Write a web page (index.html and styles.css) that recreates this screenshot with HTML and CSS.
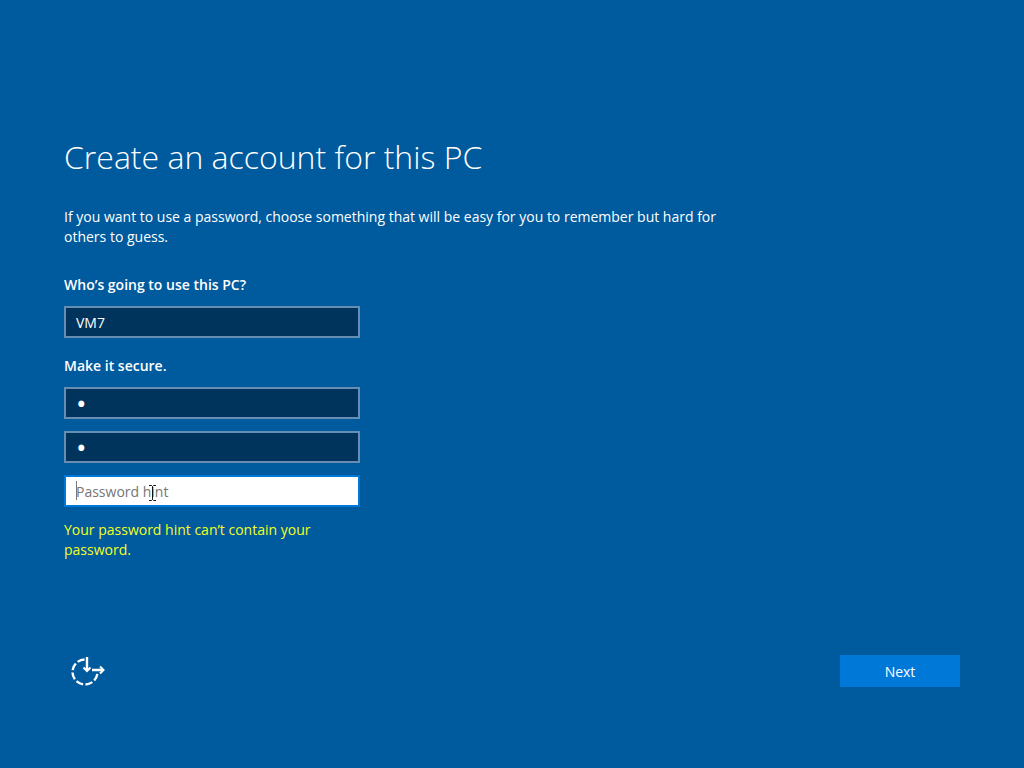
FILE: index.html
```html
<!doctype html>
<html lang="en">
<head>
    <meta charset="UTF-8">
    <meta name="viewport" content="width=device-width, initial-scale=1.0">
    <title>Create an account for this PC</title>
    <link rel="stylesheet" href="styles.css">
</head>
<body>
    <form class="setup">
        <main class="content">
            <h1>Create an account for this PC</h1>
            <p class="intro">If you want to use a password, choose something that will be easy for you to remember but hard for others to guess.</p>

            <div class="fields">
                <div class="form-group">
                    <label for="user-name">Who’s going to use this PC?</label>
                    <input type="text" id="user-name" value="VM7">
                </div>
                <div class="form-group">
                    <label for="password">Make it secure.</label>
                    <input type="password" id="password" value="1">
                    <input type="password" id="confirm-password" aria-label="Re-enter password" value="1">
                    <div class="hint-field">
                        <input type="text" class="active" id="password-hint" aria-label="Password hint" aria-describedby="hint-error" placeholder="Password hint">
                        <span class="caret"></span>
                        <svg class="pointer" width="9" height="16" viewBox="0 0 9 16" aria-hidden="true">
                            <path d="M1 .5h2.500l1 1 1-1H8M4.500 1.500v13M1 15.500h2.500l1-1 1 1H8" fill="none" stroke="#111"/>
                        </svg>
                    </div>
                </div>
                <p class="error" id="hint-error">Your password hint can’t contain your password.</p>
            </div>
        </main>

        <footer class="actions">
            <button type="button" class="ease-button" aria-label="Ease of access">
                <svg width="36" height="32" viewBox="0 0 36 32" fill="none" stroke="#fff" stroke-width="2">
                    <path d="M27.500 17A12.500 12.500 0 1 1 15 4.500" pathLength="60" stroke-width="2.400" stroke-dasharray="7.500 2.500" stroke-dashoffset="-2"/>
                    <path d="M17 2v13M22 15h11" stroke-width="2.400"/>
                    <path d="M13.500 12.500L17 16l3.500-3.500M30 11.500l3.500 3.500-3.500 3.500"/>
                </svg>
            </button>
            <button type="submit" class="next-button">Next</button>
        </footer>
    </form>
</body>
</html>
```

FILE: styles.css
```css
* {
    margin: 0;
    padding: 0;
    box-sizing: border-box;
    font-family: "Segoe UI", "Open Sans", "Noto Sans", sans-serif;
}

body {
    background-color: #005a9e;
    color: #fff;
    font-size: 14px;
    line-height: 20px;
}

.setup {
    display: flex;
    flex-direction: column;
    justify-content: space-between;
    min-height: 100vh;
    padding: 136px 64px 81px;
}

h1 {
    margin-bottom: 29px;
    font-size: 32px;
    font-weight: 300;
    line-height: 42px;
}

.intro {
    max-width: 672px;
    margin-bottom: 28px;
}

.fields {
    max-width: 296px;
}

.form-group + .form-group {
    margin-top: 18px;
}

label {
    display: block;
    margin-bottom: 11px;
    font-weight: 600;
}

input {
    display: block;
    width: 100%;
    height: 32px;
    padding: 0 10px;
    border: 2px solid #668eb3;
    background-color: #00345c;
    color: #fff;
    font-size: 14px;
    outline: none;
}

input[type="password"] {
    margin-bottom: 12px;
    font-size: 28px;
}

input.active {
    border-color: #0078d7;
    background-color: #fff;
    color: #000;
}

input::placeholder {
    color: #767676;
}

.hint-field {
    position: relative;
}

.caret {
    position: absolute;
    top: 6px;
    left: 12px;
    width: 1px;
    height: 19px;
    background-color: #777;
}

.pointer {
    position: absolute;
    top: 10px;
    left: 84px;
}

.error {
    margin-top: 13px;
    color: #f4ff20;
}

.actions {
    display: flex;
    justify-content: space-between;
    align-items: center;
}

button {
    height: 32px;
    border: none;
    color: #fff;
    font-size: 14px;
    cursor: pointer;
}

.ease-button {
    padding: 0 6px;
    background: none;
}

.ease-button svg {
    display: block;
}

.next-button {
    width: 120px;
    background-color: #0078d7;
}
```
